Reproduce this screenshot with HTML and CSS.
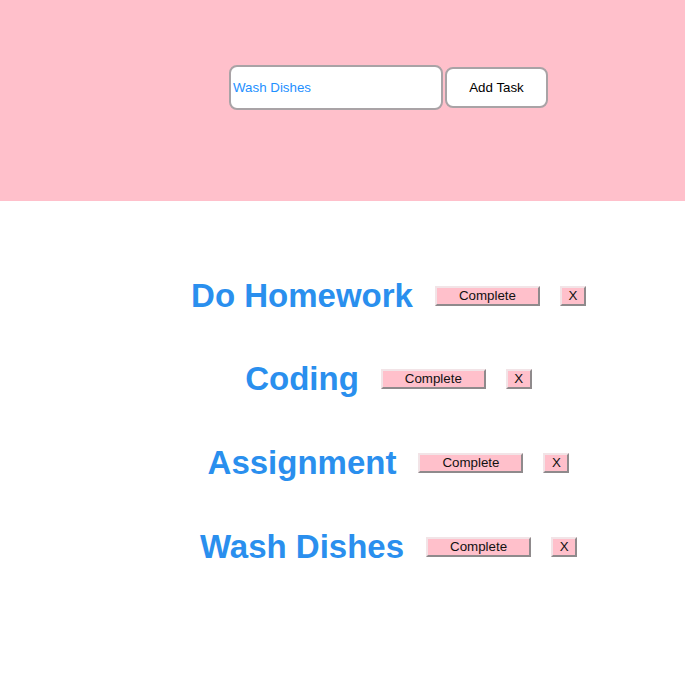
FILE: index.html
```html
<!DOCTYPE html>
<html>
<head>
<meta charset="utf-8">
<link rel="stylesheet" href="styles.css">
</head>
<body>
<header class="top">
  <div class="form">
    <input class="task-input" type="text" value="Wash Dishes">
    <button class="add-btn">Add Task</button>
  </div>
</header>
<main class="list">
  <div class="row"><h1 class="title">Do Homework</h1><button class="btn complete">Complete</button><button class="btn remove">X</button></div>
  <div class="row"><h1 class="title">Coding</h1><button class="btn complete">Complete</button><button class="btn remove">X</button></div>
  <div class="row"><h1 class="title">Assignment</h1><button class="btn complete">Complete</button><button class="btn remove">X</button></div>
  <div class="row"><h1 class="title">Wash Dishes</h1><button class="btn complete">Complete</button><button class="btn remove">X</button></div>
</main>
</body>
</html>
```

FILE: styles.css
```css
html, body {
  margin: 0;
  padding: 0;
  background: #ffffff;
  font-family: "Liberation Sans", Arial, sans-serif;
}

.top {
  background: #ffc0cb;
  height: 201px;
  box-sizing: border-box;
  padding-top: 65px;
  padding-left: 92px;
}

.form {
  display: flex;
  justify-content: center;
  align-items: center;
  gap: 2px;
}

.task-input {
  width: 214px;
  height: 45px;
  box-sizing: border-box;
  border: 2px solid #a9a3a6;
  border-radius: 8px;
  padding: 0 2px;
  font-family: "Liberation Sans", Arial, sans-serif;
  font-size: 13.33px;
  color: #1e90ff;
  background: #ffffff;
  outline: none;
}

.add-btn {
  width: 103px;
  height: 41px;
  box-sizing: border-box;
  border: 2px solid #a9a3a6;
  border-radius: 8px;
  background: #ffffff;
  font-family: "Liberation Sans", Arial, sans-serif;
  font-size: 13.33px;
  color: #000000;
  padding: 0;
}

.list {
  padding-top: 53px;
  padding-left: 92px;
}

.row {
  display: flex;
  justify-content: center;
  align-items: center;
  height: 83.67px;
}

.title {
  margin: 0 22px 0 0;
  font-size: 33px;
  font-weight: bold;
  color: #2a8fee;
  line-height: 38px;
}

.btn {
  height: 20px;
  box-sizing: border-box;
  background: #ffc0cb;
  border: 2px solid;
  border-color: #f2e4e7 #8f8a8c #8f8a8c #f2e4e7;
  font-family: "Liberation Sans", Arial, sans-serif;
  font-size: 13.33px;
  color: #111111;
  padding: 0;
  line-height: 14px;
}

.complete {
  width: 105px;
  margin-right: 20px;
}

.remove {
  width: 26px;
}
```
